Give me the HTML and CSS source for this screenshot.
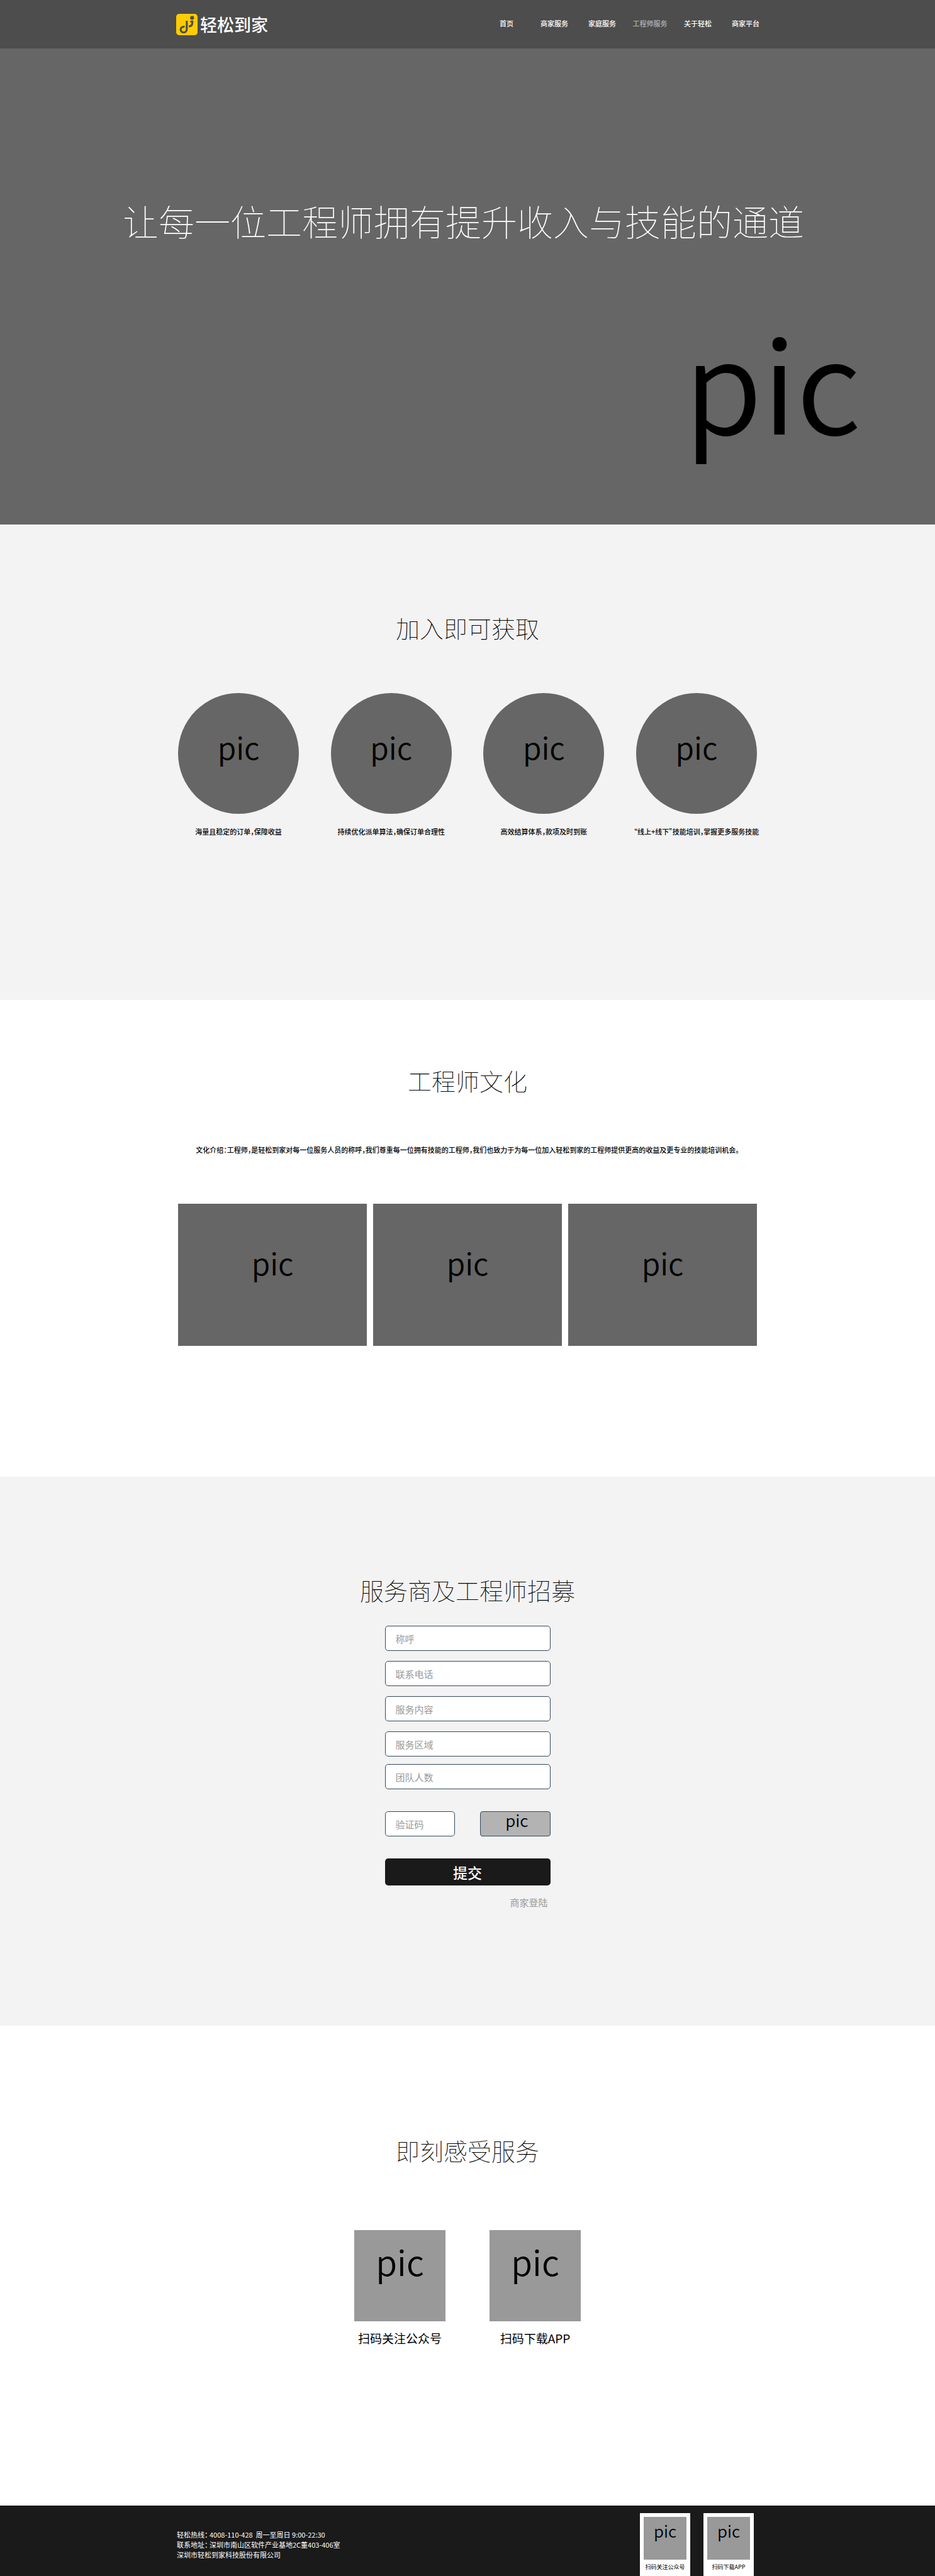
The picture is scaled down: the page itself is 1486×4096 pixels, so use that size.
FILE: index.html
```html
<!DOCTYPE html>
<html lang="zh-CN">
<head>
<meta charset="utf-8">
<meta name="viewport" content="width=device-width, initial-scale=1">
<title>轻松到家 - 工程师服务</title>
<link rel="stylesheet" href="styles.css">
</head>
<body>
<header class="header">
  <div class="container header-inner">
    <a class="logo" href="#">
      <svg class="logo-mark" viewBox="0 0 43 43" aria-hidden="true">
        <rect width="43" height="43" rx="6" fill="#fc0"/>
        <g fill="none" stroke="#4d4d4d" stroke-width="4">
          <path d="M17 25.700C12 25.500 9 28 9 31.500S11.500 37.300 15 37.300 21.300 34.500 21.300 31V14"/>
          <path d="M28.500 15.500h4V18c0 4.500-2.500 7.200-7.200 7.200"/>
        </g>
        <circle cx="32" cy="8" r="4" fill="#4d4d4d"/>
      </svg>
      <span class="logo-text">轻松到家</span>
    </a>
    <nav class="nav">
      <a href="#">首页</a>
      <a href="#">商家服务</a>
      <a href="#">家庭服务</a>
      <a class="active" href="#">工程师服务</a>
      <a href="#">关于轻松</a>
      <a href="#">商家平台</a>
    </nav>
  </div>
</header>

<main>
  <section class="hero">
    <h1>让每一位工程师拥有提升收入与技能的通道</h1>
    <div class="pic hero-pic">pic</div>
  </section>

  <section class="benefits">
    <h2>加入即可获取</h2>
    <ul class="container benefit-list">
      <li><div class="pic circle">pic</div><p>海量且稳定的订单，保障收益</p></li>
      <li><div class="pic circle">pic</div><p>持续优化派单算法，确保订单合理性</p></li>
      <li><div class="pic circle">pic</div><p>高效结算体系，款项及时到账</p></li>
      <li><div class="pic circle">pic</div><p>“线上+线下”技能培训，掌握更多服务技能</p></li>
    </ul>
  </section>

  <section class="culture">
    <h2>工程师文化</h2>
    <p class="intro">文化介绍：工程师，是轻松到家对每一位服务人员的称呼，我们尊重每一位拥有技能的工程师，我们也致力于为每一位加入轻松到家的工程师提供更高的收益及更专业的技能培训机会。</p>
    <div class="container gallery">
      <div class="pic photo">pic</div>
      <div class="pic photo">pic</div>
      <div class="pic photo">pic</div>
    </div>
  </section>

  <section class="join">
    <h2>服务商及工程师招募</h2>
    <form class="form">
      <div class="fields">
        <input type="text" placeholder="称呼" aria-label="称呼">
        <input type="tel" placeholder="联系电话" aria-label="联系电话">
        <input type="text" placeholder="服务内容" aria-label="服务内容">
        <input type="text" placeholder="服务区域" aria-label="服务区域">
      </div>
      <input type="text" placeholder="团队人数" aria-label="团队人数">
      <div class="captcha">
        <input type="text" placeholder="验证码" aria-label="验证码">
        <div class="pic captcha-pic">pic</div>
      </div>
      <button type="submit">提交</button>
      <a class="login" href="#">商家登陆</a>
    </form>
  </section>

  <section class="app">
    <h2>即刻感受服务</h2>
    <div class="codes">
      <figure><div class="pic code">pic</div><figcaption>扫码关注公众号</figcaption></figure>
      <figure><div class="pic code">pic</div><figcaption>扫码下载APP</figcaption></figure>
    </div>
  </section>
</main>

<footer class="footer">
  <div class="container footer-inner">
    <address>
      <p>轻松热线： 4008-110-428&nbsp; 周一至周日 9:00-22:30</p>
      <p>联系地址： 深圳市南山区软件产业基地2C董403-406室</p>
      <p>深圳市轻松到家科技股份有限公司</p>
    </address>
    <div class="footer-codes">
      <figure><div class="pic code-small">pic</div><figcaption>扫码关注公众号</figcaption></figure>
      <figure><div class="pic code-small">pic</div><figcaption>扫码下载APP</figcaption></figure>
    </div>
  </div>
</footer>
</body>
</html>
```

FILE: styles.css
```css
* {
  box-sizing: border-box;
  margin: 0;
  padding: 0;
}

body {
  font-family: "Noto Sans CJK SC", sans-serif;
  font-size: 11px;
  line-height: 16px;
  color: #000;
  background: #fff;
}

a {
  color: inherit;
  text-decoration: none;
}

ul {
  list-style: none;
}

.container {
  width: 100%;
  max-width: 920px;
  margin: 0 auto;
}

h2 {
  font-size: 38px;
  font-weight: 100;
  line-height: 56px;
  text-align: center;
}

/* Image placeholders */
.pic {
  color: #000;
  font-weight: 350;
}

/* Header */
.header {
  background: #4d4d4d;
  color: #fff;
}

.header-inner {
  display: flex;
  align-items: center;
  justify-content: space-between;
  height: 77px;
}

.logo {
  display: flex;
  align-items: center;
  gap: 4px;
  margin-left: -3px;
}

.logo-mark {
  width: 34px;
  height: 34px;
}

.logo-text {
  font-size: 27px;
  font-weight: 500;
  line-height: 34px;
}

.nav {
  display: grid;
  grid-template-columns: repeat(6, 76px);
  margin-right: -20px;
  padding-bottom: 4px;
  text-align: center;
  font-weight: 500;
}

.nav .active {
  color: #b3b3b3;
}

/* Hero */
.hero {
  padding: 233px 118px 91px 0;
  background: #666;
  color: #fff;
}

.hero h1 {
  padding-left: 105px;
  font-size: 57px;
  font-weight: 100;
  line-height: 80px;
  text-align: center;
}

.hero-pic {
  margin-top: 73px;
  font-size: 202px;
  line-height: 280px;
  text-align: right;
}

/* Benefits */
.benefits {
  padding: 136px 0 260px;
  background: #f3f3f3;
}

.benefit-list {
  display: flex;
  justify-content: space-between;
  margin-top: 76px;
}

.benefit-list li {
  width: 192px;
}

.circle {
  display: flex;
  align-items: center;
  justify-content: center;
  height: 192px;
  padding-bottom: 22px;
  border-radius: 50%;
  background: #666;
  font-size: 48px;
}

.benefit-list p {
  display: flex;
  justify-content: center;
  margin-top: 20px;
  font-weight: 500;
  white-space: nowrap;
  font-feature-settings: "halt";
}

/* Culture */
.culture {
  padding: 100px 0 208px;
}

.intro {
  margin-top: 74px;
  font-weight: 500;
  text-align: center;
  font-feature-settings: "halt";
}

.gallery {
  display: grid;
  grid-template-columns: repeat(3, 1fr);
  gap: 10px;
  margin-top: 78px;
}

.photo {
  height: 226px;
  padding-top: 58px;
  background: #666;
  font-size: 48px;
  line-height: 70px;
  text-align: center;
}

/* Recruitment form */
.join {
  padding: 152px 0 184px;
  background: #f3f3f3;
}

.form {
  display: flex;
  flex-direction: column;
  width: 263px;
  margin: 29px auto 0;
}

.fields {
  display: flex;
  flex-direction: column;
  gap: 16px;
  margin-bottom: 12px;
}

input {
  width: 100%;
  height: 40px;
  padding: 0 16px;
  border: 1px solid #34495e;
  border-radius: 5px;
  background: #fff;
  font: inherit;
  font-size: 15px;
}

input::placeholder {
  color: #999;
  opacity: 1;
}

.captcha {
  display: grid;
  grid-template-columns: 1fr 1fr;
  gap: 40px;
  margin: 35px 0;
}

.captcha-pic {
  height: 40px;
  padding-left: 5px;
  border: 1px solid #34495e;
  border-radius: 4px;
  background: #b3b3b3;
  font-size: 26px;
  line-height: 26px;
  text-align: center;
}

button {
  height: 43px;
  border: 0;
  border-radius: 5px;
  background: #1a1a1a;
  color: #fff;
  font: inherit;
  font-size: 23px;
  font-weight: 500;
}

.login {
  align-self: flex-end;
  margin: 15px 4px 0 0;
  color: #999;
  font-size: 15px;
  line-height: 24px;
}

/* App download */
.app {
  padding: 170px 0 252px;
}

.codes {
  display: flex;
  justify-content: center;
  gap: 70px;
  margin-top: 99px;
}

figure {
  text-align: center;
}

.code {
  width: 145px;
  height: 145px;
  padding-top: 9px;
  background: #999;
  font-size: 55px;
  line-height: 80px;
}

.codes figcaption {
  margin-top: 13px;
  font-size: 19px;
  line-height: 28px;
}

/* Footer */
.footer {
  background: #1a1a1a;
  color: #fff;
}

.footer-inner {
  display: flex;
  justify-content: space-between;
  padding-right: 5px;
}

address {
  margin: 38px 0 0 -2px;
  font-style: normal;
  font-feature-settings: "halt";
}

.footer-codes {
  display: flex;
  gap: 21px;
  padding-top: 12px;
}

.footer-codes figure {
  width: 80px;
  height: 100px;
  padding: 6px;
  background: #fff;
  color: #000;
}

.code-small {
  height: 68px;
  padding-top: 7px;
  background: #999;
  font-size: 26px;
  line-height: 30px;
}

.footer-codes figcaption {
  margin-top: 4px;
  font-size: 9px;
  white-space: nowrap;
}
```
